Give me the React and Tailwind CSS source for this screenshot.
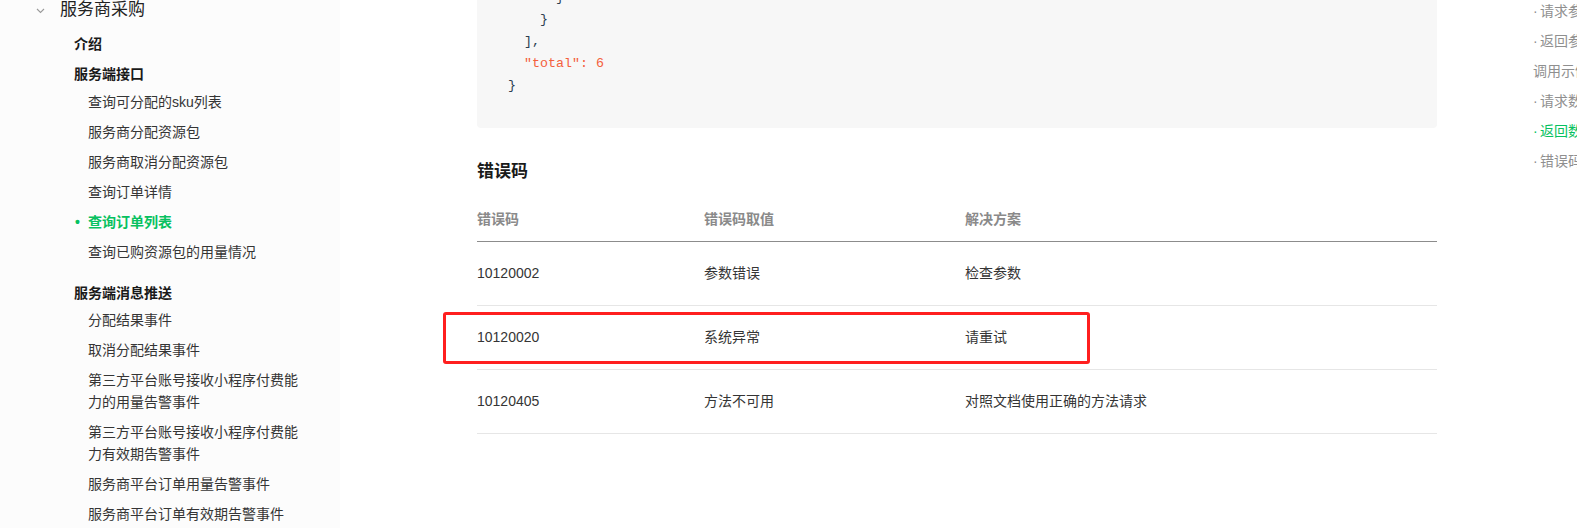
import React from 'react';

const FONT = { fontFamily: '"Liberation Sans", "Noto Sans CJK SC", sans-serif' };

const codeLines = [
  { indent: 6, text: '}' },
  { indent: 4, text: '}' },
  { indent: 2, text: '],' },
  { indent: 2, text: '"total": 6', accent: true },
  { indent: 0, text: '}' },
];

const errorRows = [
  { code: '10120002', value: '参数错误', fix: '检查参数' },
  { code: '10120020', value: '系统异常', fix: '请重试', marked: true },
  { code: '10120405', value: '方法不可用', fix: '对照文档使用正确的方法请求' },
];

const rightNav = [
  { label: '请求参数', dot: true },
  { label: '返回参数', dot: true },
  { label: '调用示例' },
  { label: '请求数据示例', dot: true },
  { label: '返回数据示例', dot: true, active: true },
  { label: '错误码', dot: true },
];

function SideItem({ children, active }) {
  return (
    <div className="relative h-[30px] leading-[30px] pl-[88px] text-[14px] text-[#353535]">
      {active && (
        <span className="absolute left-[75px] top-0 text-[#07c160] font-bold">•</span>
      )}
      <span className={active ? 'text-[#07c160] font-bold' : ''}>{children}</span>
    </div>
  );
}

function SideItemTwoLine({ children }) {
  return (
    <div className="py-[4px] pl-[88px] pr-[40px] text-[14px] leading-[22px] text-[#353535]">
      {children}
    </div>
  );
}

function Sidebar() {
  return (
    <aside className="w-[340px] shrink-0 bg-[#fcfcfc] h-[528px] overflow-hidden">
      {/* Group title */}
      <div className="flex items-center h-[20px]">
        <svg width="9" height="6" viewBox="0 0 9 6" className="ml-[36px] mt-[2px]">
          <polyline points="1,1 4.5,4.5 8,1" fill="none" stroke="#9a9a9a" strokeWidth="1.1" />
        </svg>
        <span className="ml-[15px] text-[17px] leading-[20px] text-[#222]">服务商采购</span>
      </div>

      <div className="mt-[9px] h-[30px] leading-[30px] pl-[74px] text-[14px] font-bold text-[#1a1a1a]">介绍</div>
      <div className="h-[30px] leading-[30px] pl-[74px] text-[14px] font-bold text-[#1a1a1a]">服务端接口</div>

      <div className="-mt-[2px]">
        <SideItem>查询可分配的sku列表</SideItem>
        <SideItem>服务商分配资源包</SideItem>
        <SideItem>服务商取消分配资源包</SideItem>
        <SideItem>查询订单详情</SideItem>
        <SideItem active>查询订单列表</SideItem>
        <SideItem>查询已购资源包的用量情况</SideItem>
      </div>

      <div className="mt-[11px] h-[30px] leading-[30px] pl-[74px] text-[14px] font-bold text-[#1a1a1a]">服务端消息推送</div>

      <div className="-mt-[3px]">
        <SideItem>分配结果事件</SideItem>
        <SideItem>取消分配结果事件</SideItem>
        <SideItemTwoLine>第三方平台账号接收小程序付费能力的用量告警事件</SideItemTwoLine>
        <SideItemTwoLine>第三方平台账号接收小程序付费能力有效期告警事件</SideItemTwoLine>
        <SideItem>服务商平台订单用量告警事件</SideItem>
        <SideItem>服务商平台订单有效期告警事件</SideItem>
      </div>
    </aside>
  );
}

function CodeBlock() {
  return (
    <div
      className="-mt-[26px] pt-[13px] pb-[31px] pl-[31px] bg-[#f7f7f7] rounded-[4px] text-[13.33px] leading-[22px] whitespace-pre"
      style={{ fontFamily: '"Liberation Mono", monospace' }}
    >
      {codeLines.map((line, i) => (
        <div key={i} className={line.accent ? 'text-[#f4603c]' : 'text-[#2c3e50]'}>
          {' '.repeat(line.indent)}
          {line.text}
        </div>
      ))}
    </div>
  );
}

function ErrorTable() {
  return (
    <div className="relative text-[14px]">
      <div className="flex h-[45px] items-center border-b border-[#8c8c8c] text-[#8a8a8a] font-bold">
        <div className="w-[227px]">错误码</div>
        <div className="w-[261px]">错误码取值</div>
        <div>解决方案</div>
      </div>
      {errorRows.map((row) => (
        <div
          key={row.code}
          className="relative flex h-[64px] items-center border-b border-[#e6e6e6] text-[#353535]"
        >
          <div className="w-[227px]">{row.code}</div>
          <div className="w-[261px]">{row.value}</div>
          <div>{row.fix}</div>
          {row.marked && (
            <div className="absolute left-[-34px] top-[6px] w-[647px] h-[52px] border-[3px] border-[#ff1f1f] rounded-[3px]" />
          )}
        </div>
      ))}
    </div>
  );
}

function RightNav() {
  return (
    <nav className="-mt-[4px] ml-[96px] shrink-0 text-[14px] text-[#8f8f8f] whitespace-nowrap">
      {rightNav.map((item) => (
        <div
          key={item.label}
          className={`h-[30px] leading-[30px] ${item.active ? 'text-[#07c160]' : ''}`}
        >
          {item.dot && <span className="inline-block w-[7px]">·</span>}
          {item.label}
        </div>
      ))}
    </nav>
  );
}

export default function App() {
  return (
    <div className="flex w-[1577px] h-[528px] overflow-hidden bg-white" style={FONT}>
      <Sidebar />

      <main className="ml-[137px] w-[960px] shrink-0">
        <CodeBlock />

        {/* Error codes section */}
        <h2 className="mt-[30px] h-[28px] leading-[28px] text-[17px] font-bold text-[#1a1a1a]">错误码</h2>
        <div className="mt-[11px]">
          <ErrorTable />
        </div>
      </main>

      <RightNav />
    </div>
  );
}
